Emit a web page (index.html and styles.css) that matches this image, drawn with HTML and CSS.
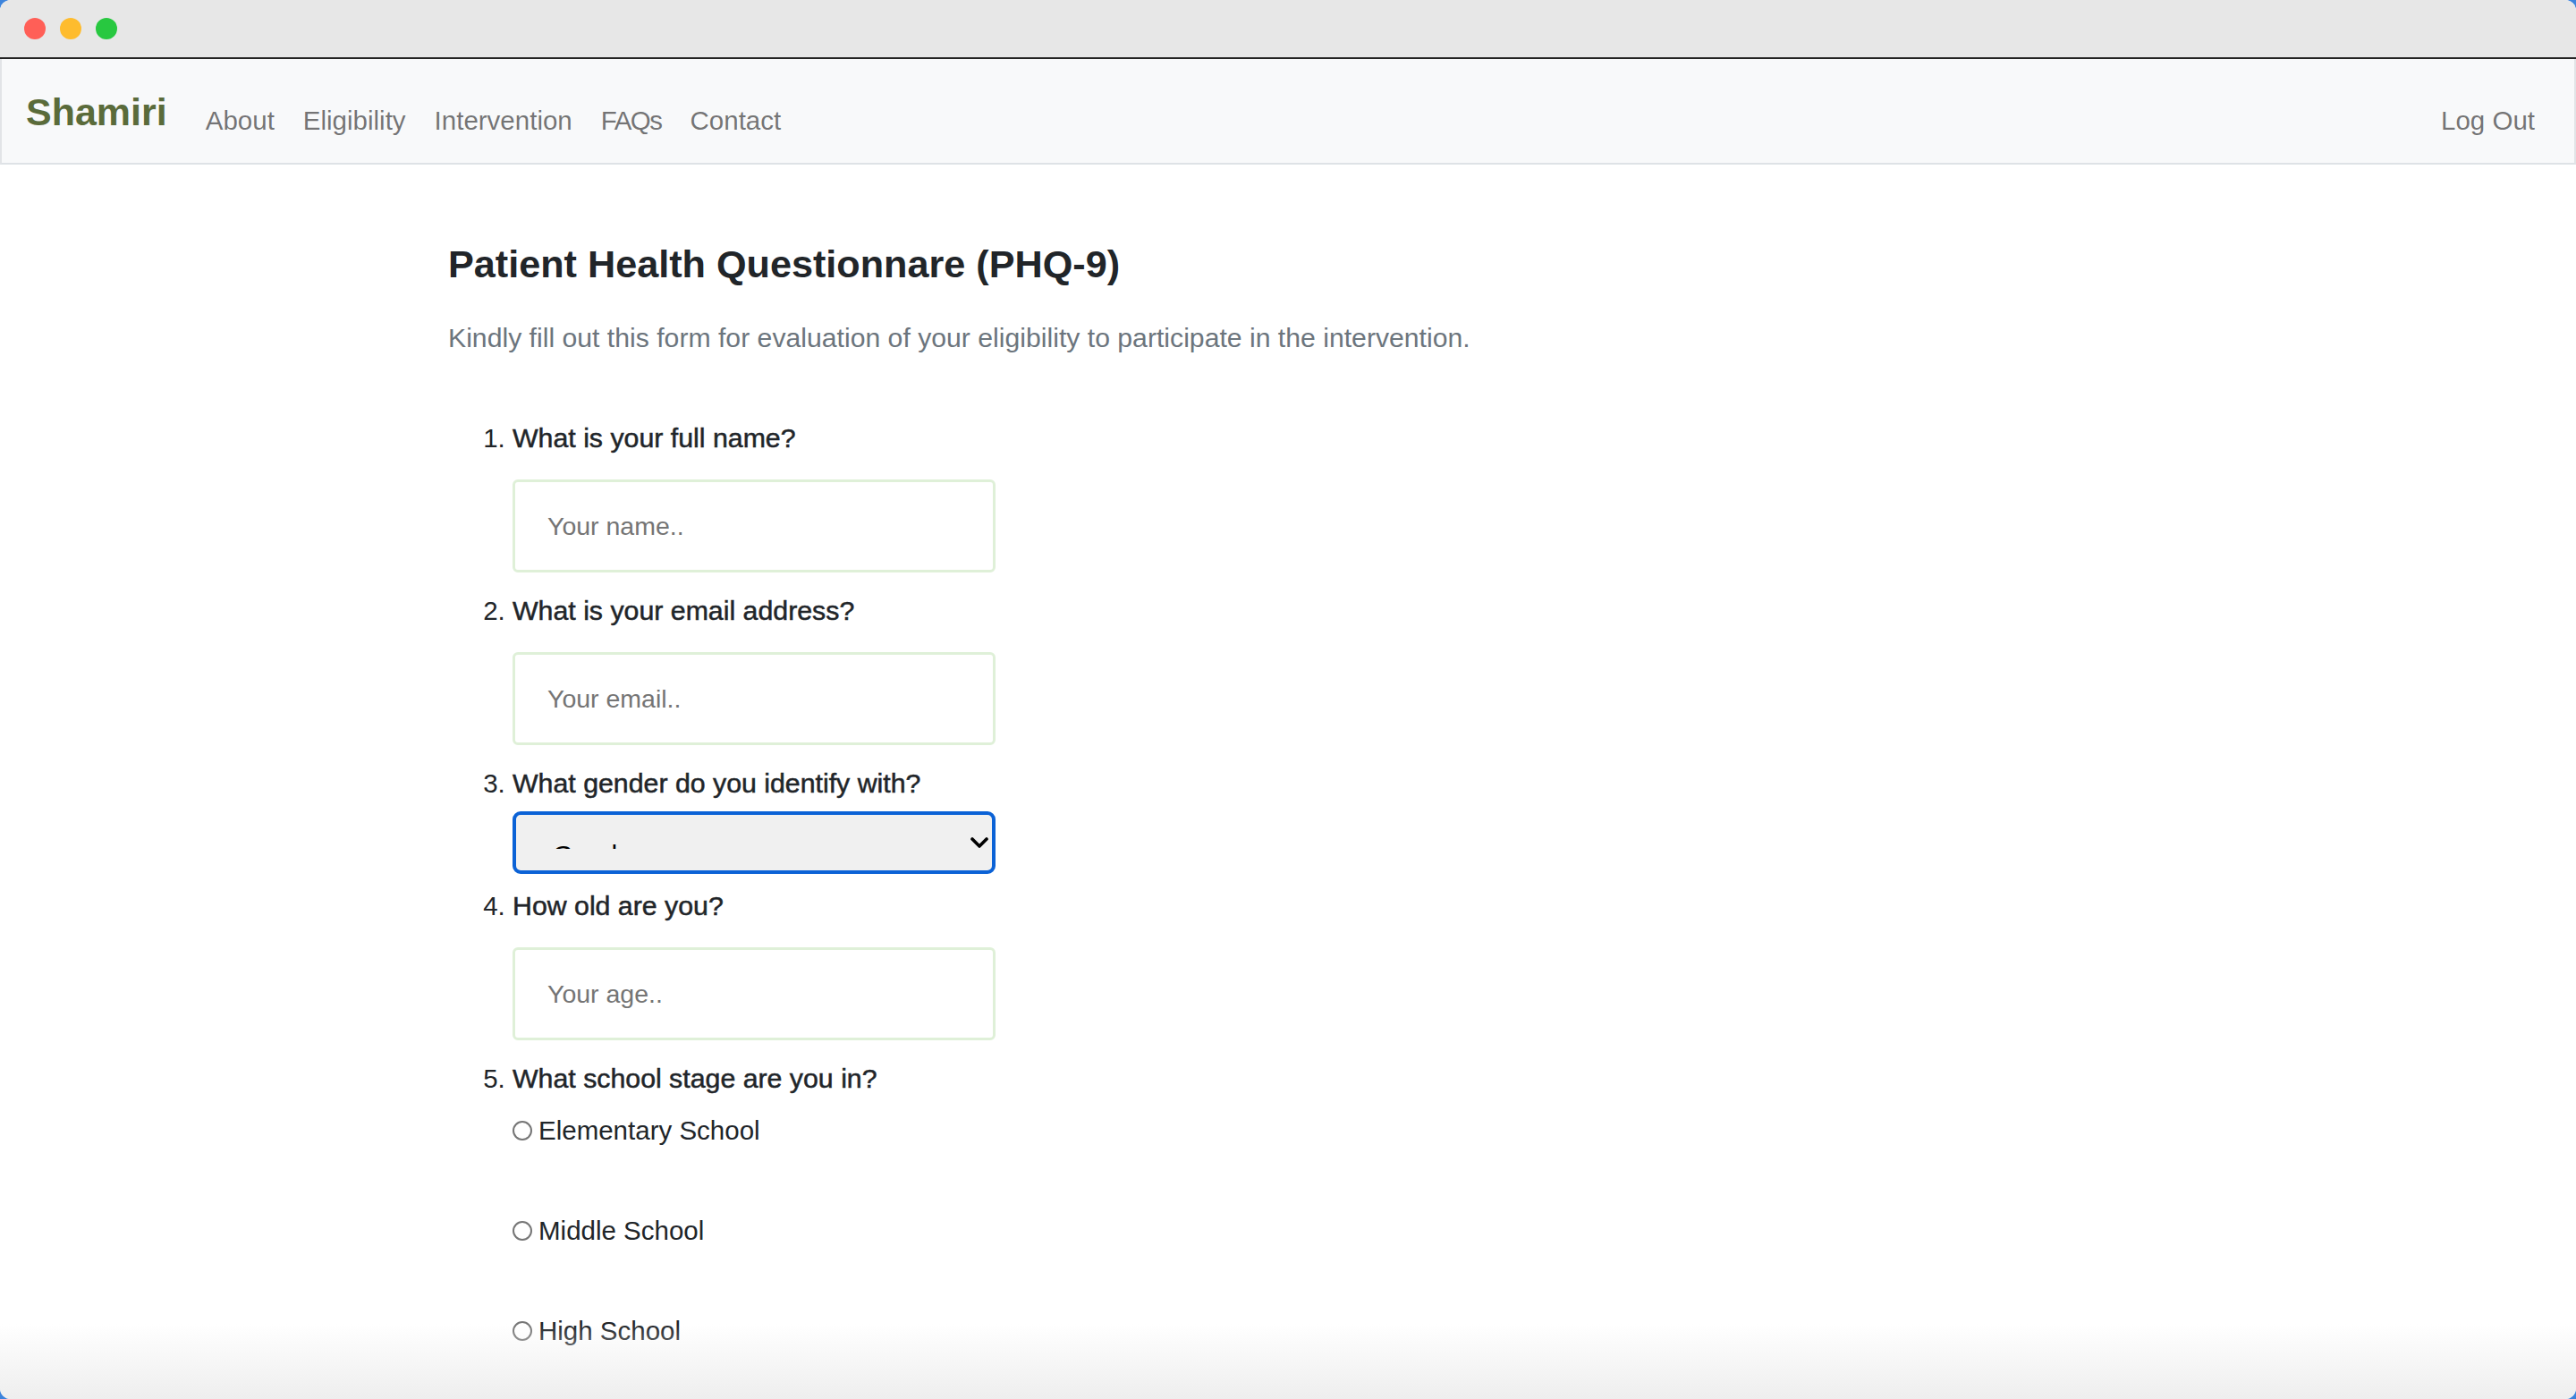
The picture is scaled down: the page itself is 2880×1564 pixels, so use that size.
FILE: index.html
```html
<!DOCTYPE html>
<html lang="en">
<head>
<meta charset="utf-8">
<title>Shamiri - PHQ-9</title>
<link rel="stylesheet" href="styles.css">
</head>
<body>
<div class="window">
  <div class="titlebar">
    <span class="light light-red"></span>
    <span class="light light-yellow"></span>
    <span class="light light-green"></span>
  </div>
  <nav class="navbar">
    <a class="brand" href="#">Shamiri</a>
    <ul class="nav-list">
      <li><a class="nav-link" href="#">About</a></li>
      <li><a class="nav-link" href="#">Eligibility</a></li>
      <li><a class="nav-link" href="#">Intervention</a></li>
      <li><a class="nav-link nav-link-narrow" href="#">FAQs</a></li>
      <li><a class="nav-link" href="#">Contact</a></li>
    </ul>
    <a class="nav-link logout" href="#">Log Out</a>
  </nav>
  <main class="content">
    <h1 class="title">Patient Health Questionnare (PHQ-9)</h1>
    <p class="lead">Kindly fill out this form for evaluation of your eligibility to participate in the intervention.</p>
    <ol class="questions">
      <li class="question">
        <label class="q-label">What is your full name?</label>
        <input class="field" type="text" placeholder="Your name..">
      </li>
      <li class="question">
        <label class="q-label">What is your email address?</label>
        <input class="field" type="text" placeholder="Your email..">
      </li>
      <li class="question">
        <label class="q-label q-label-tight">What gender do you identify with?</label>
        <div class="select">
          <div class="select-clip"><span class="select-text">Gender</span></div>
          <svg class="chevron" width="20" height="12" viewBox="0 0 20 12"><polyline points="2,2 10,10 18,2" fill="none" stroke="#000" stroke-width="3.6" stroke-linecap="round" stroke-linejoin="round"/></svg>
        </div>
      </li>
      <li class="question">
        <label class="q-label">How old are you?</label>
        <input class="field" type="text" placeholder="Your age..">
      </li>
      <li class="question">
        <label class="q-label q-label-radio">What school stage are you in?</label>
        <div class="options">
          <label class="option"><input class="radio" type="radio" name="stage">Elementary School</label>
          <label class="option"><input class="radio" type="radio" name="stage">Middle School</label>
          <label class="option"><input class="radio" type="radio" name="stage">High School</label>
        </div>
      </li>
    </ol>
  </main>
  <div class="bottom-fade"></div>
</div>
</body>
</html>
```
FILE: styles.css
```css
html, body {
  margin: 0;
  padding: 0;
  height: 100%;
  background: #3d84dc;
  overflow: hidden;
}

body {
  font-family: "Liberation Sans", Arial, sans-serif;
  font-size: 29.5px;
  line-height: 44px;
  color: #212529;
}

.window {
  position: relative;
  height: 100%;
  background: #ffffff;
  border-radius: 12px;
  overflow: hidden;
}

.titlebar {
  height: 64px;
  background: #e7e7e7;
  border-bottom: 2px solid #232323;
  display: flex;
  align-items: center;
  gap: 16px;
  padding-left: 27px;
}

.light {
  width: 24px;
  height: 24px;
  border-radius: 50%;
  display: block;
}
.light-red { background: #ff5f57; }
.light-yellow { background: #febc2e; }
.light-green { background: #28c840; }

.navbar {
  height: 118px;
  box-sizing: border-box;
  background: #f8f9fa;
  border-bottom: 2px solid #dee2e6;
  border-left: 2px solid #e2e4e7;
  border-right: 2px solid #e2e4e7;
  display: flex;
  align-items: flex-end;
  padding: 0 28px 25px 27px;
}

.brand {
  font-size: 43px;
  font-weight: bold;
  line-height: 64px;
  color: #5a6b3a;
  text-decoration: none;
  margin-right: 27px;
}

.nav-list {
  display: flex;
  list-style: none;
  margin: 0;
  padding: 0;
}

.nav-link {
  display: block;
  padding: 0 16px;
  line-height: 44px;
  color: rgba(0, 0, 0, 0.55);
  text-decoration: none;
}

.nav-link-narrow {
  letter-spacing: -1.5px;
}

.logout {
  margin-left: auto;
}

.content {
  padding: 85px 0 0 501px;
}

.title {
  margin: 0;
  font-size: 43.2px;
  line-height: 52px;
  font-weight: bold;
  color: #212529;
}

.lead {
  margin: 35px 0 0;
  font-size: 30.2px;
  color: #6c757d;
}

.questions {
  margin: 68px 0 0;
  padding: 0 0 0 72px;
}

.question::marker {
  color: #212529;
  font-size: 29.5px;
}

.q-label {
  display: block;
  margin-bottom: 24px;
  font-size: 30.3px;
  -webkit-text-stroke: 0.5px #212529;
}

.q-label-tight {
  margin-bottom: 9px;
}

.q-label-radio {
  margin-bottom: 14px;
}

.field {
  display: block;
  box-sizing: border-box;
  width: 540px;
  height: 104px;
  margin: 0 0 21px;
  padding: 0 36px;
  border: 3px solid #dff0d8;
  border-radius: 6px;
  background: #fff;
  font-family: "Liberation Sans", Arial, sans-serif;
  font-size: 28.5px;
  color: #212529;
  outline: none;
}

.field::placeholder {
  color: #757575;
}

.select {
  box-sizing: border-box;
  width: 540px;
  height: 70px;
  margin-bottom: 14px;
  border: 4px solid #0b62d6;
  border-radius: 9px;
  background: #f0f0f0;
  display: flex;
  align-items: flex-start;
}

.select-clip {
  flex: 1;
  height: 14px;
  margin: 24px 0 0 41px;
  overflow: hidden;
}

.select-text {
  display: block;
  padding-top: 6px;
  font-size: 29.5px;
  line-height: 29.5px;
  color: #000;
}

.chevron {
  align-self: center;
  margin-right: 4px;
}

.options {
  display: flex;
  flex-direction: column;
  gap: 68px;
}

.option {
  display: flex;
  align-items: center;
  height: 44px;
}

.radio {
  appearance: none;
  -webkit-appearance: none;
  box-sizing: border-box;
  width: 22px;
  height: 22px;
  margin: 0 7px 0 0;
  border: 2px solid #767676;
  border-radius: 50%;
  background: #fff;
}

.bottom-fade {
  position: absolute;
  left: 0;
  right: 0;
  bottom: 0;
  height: 84px;
  background: linear-gradient(to bottom, rgba(239, 239, 239, 0), #eeeeee);
  pointer-events: none;
}
```
